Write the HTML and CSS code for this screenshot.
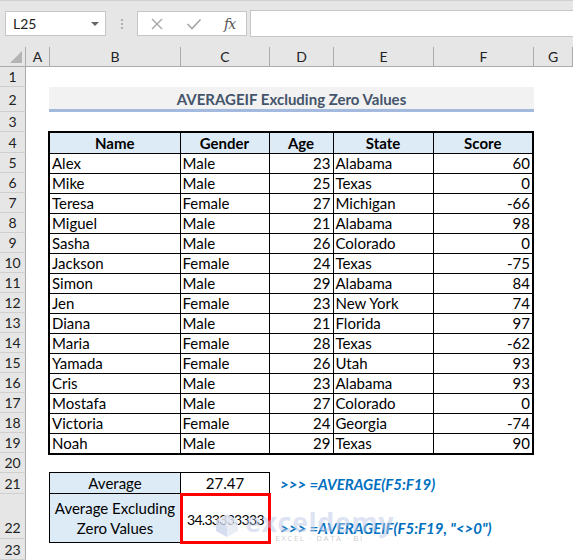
FILE: index.html
```html
<!DOCTYPE html>
<html lang="en">
<head>
    <meta charset="UTF-8">
    <title>AVERAGEIF Excluding Zero Values</title>
    <link rel="stylesheet" href="styles.css">
</head>
<body>
    <!-- Barra de nombre y fórmula -->
    <div class="topbar">
        <div class="namebox">
            <span>L25</span>
            <span class="caret"></span>
        </div>
        <div class="dots">
            <span></span><span></span><span></span>
        </div>
        <div class="fxbox">
            <svg width="14" height="14" viewBox="0 0 14 14"><path d="M2 2 L12 12 M12 2 L2 12" stroke="#a6a6a6" stroke-width="1.4" fill="none"/></svg>
            <svg width="16" height="14" viewBox="0 0 16 14"><path d="M1.5 7 L6 11.5 L14.5 2.5" stroke="#a6a6a6" stroke-width="1.6" fill="none"/></svg>
            <span class="fx">fx</span>
        </div>
        <div class="formula"></div>
    </div>

    <!-- Hoja -->
    <div class="sheet">
        <div class="corner"><span></span></div>
        <div class="colhead">A</div>
        <div class="colhead">B</div>
        <div class="colhead">C</div>
        <div class="colhead">D</div>
        <div class="colhead">E</div>
        <div class="colhead">F</div>
        <div class="colhead">G</div>

        <div class="rowhead" style="grid-row: 2">1</div>
        <div class="rowhead" style="grid-row: 3">2</div>
        <div class="rowhead" style="grid-row: 4">3</div>
        <div class="rowhead" style="grid-row: 5">4</div>
        <div class="rowhead" style="grid-row: 6">5</div>
        <div class="rowhead" style="grid-row: 7">6</div>
        <div class="rowhead" style="grid-row: 8">7</div>
        <div class="rowhead" style="grid-row: 9">8</div>
        <div class="rowhead" style="grid-row: 10">9</div>
        <div class="rowhead" style="grid-row: 11">10</div>
        <div class="rowhead" style="grid-row: 12">11</div>
        <div class="rowhead" style="grid-row: 13">12</div>
        <div class="rowhead" style="grid-row: 14">13</div>
        <div class="rowhead" style="grid-row: 15">14</div>
        <div class="rowhead" style="grid-row: 16">15</div>
        <div class="rowhead" style="grid-row: 17">16</div>
        <div class="rowhead" style="grid-row: 18">17</div>
        <div class="rowhead" style="grid-row: 19">18</div>
        <div class="rowhead" style="grid-row: 20">19</div>
        <div class="rowhead" style="grid-row: 21">20</div>
        <div class="rowhead" style="grid-row: 22">21</div>
        <div class="rowhead row22" style="grid-row: 23">22</div>
        <div class="rowhead" style="grid-row: 24">23</div>

        <div class="title">AVERAGEIF Excluding Zero Values</div>

        <div class="data-wrap">
            <table class="data">
                <colgroup>
                    <col style="width:131px"><col style="width:89px"><col style="width:64px"><col style="width:100px"><col style="width:100px">
                </colgroup>
                <thead>
                    <tr><th>Name</th><th>Gender</th><th>Age</th><th>State</th><th>Score</th></tr>
                </thead>
                <tbody>
                    <tr><td>Alex</td><td>Male</td><td class="num">23</td><td>Alabama</td><td class="num">60</td></tr>
                    <tr><td>Mike</td><td>Male</td><td class="num">25</td><td>Texas</td><td class="num">0</td></tr>
                    <tr><td>Teresa</td><td>Female</td><td class="num">27</td><td>Michigan</td><td class="num">-66</td></tr>
                    <tr><td>Miguel</td><td>Male</td><td class="num">21</td><td>Alabama</td><td class="num">98</td></tr>
                    <tr><td>Sasha</td><td>Male</td><td class="num">26</td><td>Colorado</td><td class="num">0</td></tr>
                    <tr><td>Jackson</td><td>Female</td><td class="num">24</td><td>Texas</td><td class="num">-75</td></tr>
                    <tr><td>Simon</td><td>Male</td><td class="num">29</td><td>Alabama</td><td class="num">84</td></tr>
                    <tr><td>Jen</td><td>Female</td><td class="num">23</td><td>New York</td><td class="num">74</td></tr>
                    <tr><td>Diana</td><td>Male</td><td class="num">21</td><td>Florida</td><td class="num">97</td></tr>
                    <tr><td>Maria</td><td>Female</td><td class="num">28</td><td>Texas</td><td class="num">-62</td></tr>
                    <tr><td>Yamada</td><td>Female</td><td class="num">26</td><td>Utah</td><td class="num">93</td></tr>
                    <tr><td>Cris</td><td>Male</td><td class="num">23</td><td>Alabama</td><td class="num">93</td></tr>
                    <tr><td>Mostafa</td><td>Male</td><td class="num">27</td><td>Colorado</td><td class="num">0</td></tr>
                    <tr><td>Victoria</td><td>Female</td><td class="num">24</td><td>Georgia</td><td class="num">-74</td></tr>
                    <tr><td>Noah</td><td>Male</td><td class="num">29</td><td>Texas</td><td class="num">90</td></tr>
                </tbody>
            </table>
        </div>

        <div class="summary-wrap">
            <table class="summary">
                <colgroup><col style="width:131px"><col style="width:89px"></colgroup>
                <tr class="r21"><th>Average</th><td class="center">27.47</td></tr>
                <tr class="r22"><th>Average Excluding<br>Zero Values</th><td class="picked">34.33333333</td></tr>
            </table>
        </div>

        <div class="note note-1">&gt;&gt;&gt; =AVERAGE(F5:F19)</div>
        <div class="note note-2">&gt;&gt;&gt; =AVERAGEIF(F5:F19, "&lt;&gt;0")</div>

        <!-- Marca de agua -->
        <div class="watermark">
            <svg width="26" height="26" viewBox="0 0 26 26">
                <path d="M13 2 L24 8 L13 14 L2 8 Z" fill="#dfe5f2"/>
                <path d="M2 8 L13 14 L13 25 L2 19 Z" fill="#cfd8ec"/>
                <path d="M24 8 L13 14 L13 25 L24 19 Z" fill="#e6ebf5"/>
            </svg>
            <div class="wm-text">
                <span class="wm-name">exceldemy</span>
                <span class="wm-sub">EXCEL · DATA · BI</span>
            </div>
        </div>
    </div>
</body>
</html>
```

FILE: styles.css
```css
body {
    margin: 0;
    background-color: #fff;
    font-family: 'Lato', 'Liberation Sans', sans-serif;
    font-size: 15px;
    color: #000;
    width: 573px;
    height: 560px;
    overflow: hidden;
}

/* Barra superior */
.topbar {
    height: 47px;
    background-color: #e6e6e6;
    border-top: 1px solid #d0d0d0;
    box-sizing: border-box;
    display: flex;
    align-items: center;
    padding-left: 5px;
    padding-bottom: 1px;
}
.namebox {
    width: 101px;
    height: 25px;
    box-sizing: border-box;
    background-color: #fff;
    border: 1px solid #c6c6c6;
    display: flex;
    align-items: center;
    justify-content: space-between;
    padding: 0 6px 0 7px;
    font-size: 14px;
    color: #222;
}
.caret {
    width: 0;
    height: 0;
    border-left: 4px solid transparent;
    border-right: 4px solid transparent;
    border-top: 4px solid #666;
}
.dots {
    width: 31px;
    display: flex;
    flex-direction: column;
    align-items: center;
    gap: 2px;
}
.dots span {
    width: 2px;
    height: 2px;
    background-color: #b0b0b0;
}
.fxbox {
    width: 110px;
    height: 25px;
    box-sizing: border-box;
    background-color: #fff;
    border: 1px solid #c6c6c6;
    display: flex;
    align-items: center;
    padding-left: 12px;
    gap: 22px;
}
.fx {
    font-family: 'DejaVu Serif', serif;
    font-style: italic;
    font-size: 14px;
    color: #555;
    letter-spacing: -1px;
}
.formula {
    flex: 1;
    height: 25px;
    margin-left: 3px;
    background-color: #fff;
    border: 1px solid #c6c6c6;
    border-right: none;
}

/* Hoja de cálculo */
.sheet {
    position: relative;
    display: grid;
    grid-template-columns: 26px 24px 131px 89px 64px 100px 100px 1fr;
    grid-template-rows: 20px 20px 25px 20px 21px repeat(15, 20px) 20px 21px 45px 21px;
}
.corner {
    grid-row: 1;
    grid-column: 1;
    background-color: #e6e6e6;
    border-right: 1px solid #ababab;
    border-bottom: 1px solid #ababab;
    position: relative;
}
.corner span {
    position: absolute;
    right: 3px;
    bottom: 3px;
    width: 0;
    height: 0;
    border-left: 12px solid transparent;
    border-bottom: 12px solid #b4b4b4;
}
.colhead {
    grid-row: 1;
    background-color: #e6e6e6;
    border-right: 1px solid #ababab;
    border-bottom: 1px solid #ababab;
    display: flex;
    align-items: center;
    justify-content: center;
    font-size: 14px;
    color: #222;
}
.colhead:last-of-type {
    border-right: none;
}
.rowhead {
    grid-column: 1;
    background-color: #e6e6e6;
    border-right: 1px solid #ababab;
    border-bottom: 1px solid #cfcfcf;
    display: flex;
    align-items: center;
    justify-content: center;
    font-size: 14px;
    color: #222;
}
.row22 {
    align-items: flex-end;
    padding-bottom: 2px;
}

.title {
    grid-row: 3;
    grid-column: 3 / 8;
    margin-left: -1px;
    background-color: #f2f2f2;
    border-bottom: 3px solid #a4b9de;
    display: flex;
    align-items: center;
    justify-content: center;
    font-weight: bold;
    color: #44546a;
    padding-top: 1px;
}

.data-wrap {
    grid-row: 5 / 21;
    grid-column: 3 / 8;
    margin: -1px 0 0 -2px;
}
.data {
    border-collapse: collapse;
    table-layout: fixed;
    border: 2px solid #000;
}
.data th, .data td {
    border: 1px solid #000;
    padding: 0 2px;
    height: 19px;
    line-height: 17px;
    white-space: nowrap;
    overflow: hidden;
}
.data th {
    background-color: #ddebf7;
    font-weight: bold;
    height: 20px;
}
.num {
    text-align: right;
}

.summary-wrap {
    grid-row: 22 / 24;
    grid-column: 3 / 5;
    margin: -1px 0 0 -1px;
}
.summary {
    width: 221px;
    border-collapse: collapse;
    table-layout: fixed;
}
.summary th, .summary td {
    border: 1px solid #000;
    padding: 0 1px;
    line-height: 20px;
    white-space: nowrap;
}
.summary th {
    background-color: #ddebf7;
    font-weight: normal;
    text-align: center;
}
.r21 th, .r21 td {
    height: 20px;
}
.r22 th, .r22 td {
    height: 44px;
}
.center {
    text-align: center;
}
.summary td.picked {
    outline: 3px solid #ff0000;
    outline-offset: -2px;
    padding-left: 6px;
    padding-top: 4px;
    font-size: 14px;
    letter-spacing: -0.7px;
}

.note {
    grid-column: 5 / 8;
    padding-left: 10px;
    font-weight: bold;
    font-style: italic;
    color: #0070c0;
    white-space: nowrap;
}
.note-1 {
    grid-row: 22;
    align-self: center;
}
.note-2 {
    grid-row: 23;
    align-self: end;
    padding-bottom: 2px;
}

.watermark {
    position: absolute;
    left: 214px;
    top: 461px;
    display: flex;
    align-items: center;
    gap: 5px;
    opacity: 0.85;
}
.wm-text {
    display: flex;
    flex-direction: column;
    align-items: center;
    line-height: 1;
}
.wm-name {
    font-family: 'Open Sans', sans-serif;
    font-size: 27px;
    font-weight: bold;
    color: rgba(190, 202, 230, 0.6);
    letter-spacing: 0.5px;
}
.wm-sub {
    font-family: 'Open Sans', sans-serif;
    font-size: 8px;
    color: rgba(170, 170, 170, 0.7);
    letter-spacing: 1.5px;
    margin-top: -1px;
}
```
